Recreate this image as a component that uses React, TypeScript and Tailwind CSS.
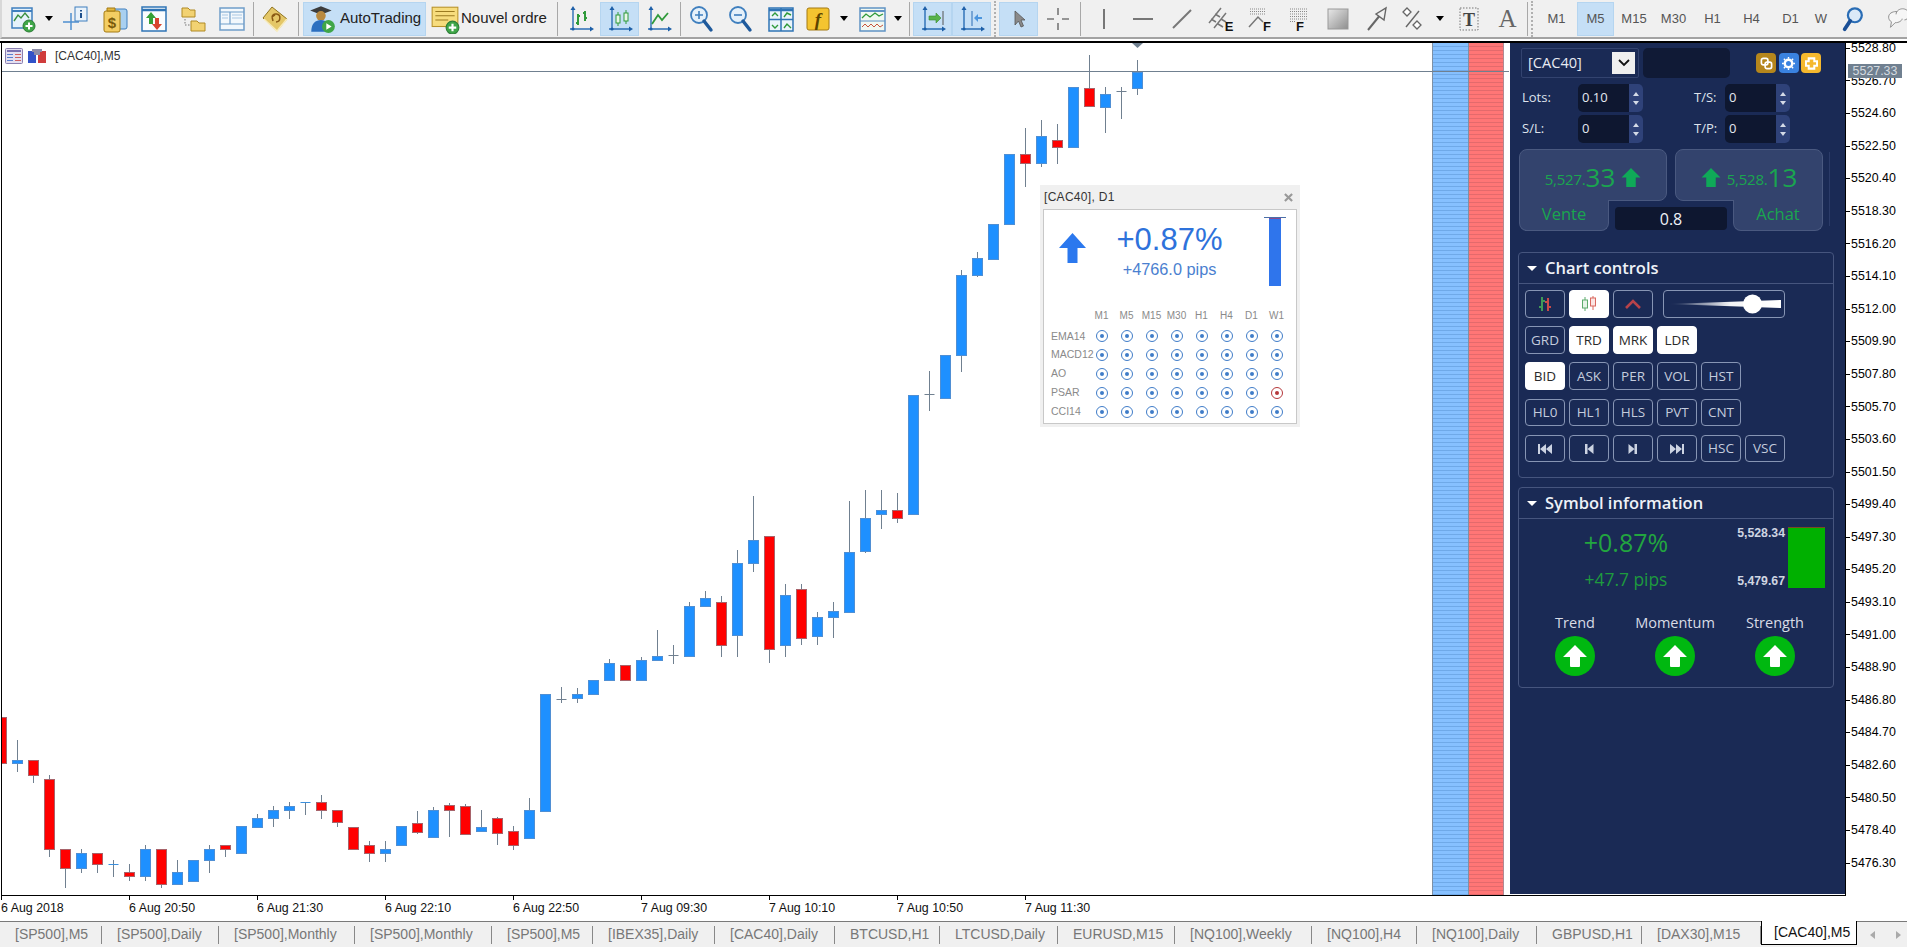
import * as React from "react";

type Candle = [number, number, number, number, "b" | "r"];

// body top, body bottom, wick top, wick bottom, colour (page pixels, 16px apart)
const CANDLES: Candle[] = [
  [717, 763, 717, 763, "r"], [760, 763, 740, 772, "b"], [760, 775, 760, 783, "r"], [779, 849, 775, 857, "r"],
  [849, 868, 849, 888, "r"], [853, 868, 849, 873, "b"], [853, 864, 853, 873, "r"], [864, 864, 860, 877, "b"],
  [872, 876, 864, 881, "r"], [849, 876, 845, 881, "b"], [849, 884, 849, 888, "r"], [872, 884, 860, 884, "b"],
  [860, 881, 860, 881, "b"], [849, 860, 845, 873, "b"], [845, 849, 845, 857, "r"], [826, 853, 826, 853, "b"],
  [818, 827, 814, 827, "b"], [810, 818, 806, 827, "b"], [806, 810, 802, 819, "b"], [802, 802, 802, 815, "b"],
  [802, 810, 795, 819, "r"], [810, 822, 810, 827, "r"], [827, 849, 827, 849, "r"], [845, 853, 841, 862, "r"],
  [849, 853, 841, 862, "b"], [826, 845, 826, 845, "b"], [823, 832, 811, 834, "r"], [810, 837, 807, 837, "b"],
  [805, 810, 803, 837, "r"], [806, 834, 804, 834, "r"], [827, 831, 810, 832, "b"], [818, 833, 817, 845, "r"],
  [831, 845, 826, 850, "r"], [810, 838, 798, 839, "b"], [694, 811, 694, 811, "b"], [699, 699, 687, 703, "b"],
  [694, 698, 688, 703, "b"], [680, 694, 680, 694, "b"], [663, 680, 659, 681, "b"], [665, 680, 665, 680, "r"],
  [660, 680, 657, 680, "b"], [656, 660, 630, 660, "b"], [655, 655, 645, 664, "b"], [606, 656, 602, 657, "b"],
  [598, 606, 591, 606, "b"], [602, 645, 596, 657, "r"], [563, 635, 550, 657, "b"], [540, 563, 496, 572, "b"],
  [536, 649, 536, 663, "r"], [595, 645, 584, 657, "b"], [589, 638, 584, 645, "r"], [617, 636, 612, 645, "b"],
  [611, 617, 602, 638, "b"], [552, 612, 501, 612, "b"], [518, 551, 490, 553, "b"], [510, 514, 490, 529, "b"],
  [510, 518, 493, 523, "r"], [395, 514, 395, 514, "b"], [394, 394, 371, 411, "b"], [355, 398, 355, 371, "b"],
  [275, 355, 270, 372, "b"], [258, 275, 252, 277, "b"], [224, 259, 224, 259, "b"], [154, 224, 154, 224, "b"],
  [154, 163, 128, 187, "r"], [136, 163, 120, 167, "b"], [140, 147, 124, 164, "r"], [87, 147, 87, 147, "b"],
  [88, 106, 55, 106, "r"], [94, 107, 87, 133, "b"], [91, 91, 87, 119, "b"], [72, 88, 60, 95, "b"],
];

const PRICES = Array.from({ length: 26 }, (_, i) => (5528.8 - i * 2.1).toFixed(2));
const TIMES = ["6 Aug 2018", "6 Aug 20:50", "6 Aug 21:30", "6 Aug 22:10", "6 Aug 22:50", "7 Aug 09:30", "7 Aug 10:10", "7 Aug 10:50", "7 Aug 11:30"];

const TABS: [string, string][] = [
  ["[SP500],M5", "w-[102px]"], ["[SP500],Daily", "w-[117px]"], ["[SP500],Monthly", "w-[136px]"], ["[SP500],Monthly", "w-[137px]"],
  ["[SP500],M5", "w-[101px]"], ["[IBEX35],Daily", "w-[122px]"], ["[CAC40],Daily", "w-[120px]"], ["BTCUSD,H1", "w-[105px]"],
  ["LTCUSD,Daily", "w-[118px]"], ["EURUSD,M15", "w-[117px]"], ["[NQ100],Weekly", "w-[137px]"], ["[NQ100],H4", "w-[105px]"],
  ["[NQ100],Daily", "w-[120px]"], ["GBPUSD,H1", "w-[105px]"], ["[DAX30],M15", "w-[119px]"],
];

const HEADS = ["M1", "M5", "M15", "M30", "H1", "H4", "D1", "W1"];
const ROWS = ["EMA14", "MACD12", "AO", "PSAR", "CCI14"];

function Ico({ children, size = 28 }: { children: React.ReactNode; size?: number }) {
  return (
    <svg viewBox="0 0 28 28" width={size} height={size}>
      {children}
    </svg>
  );
}

const Plus = ({ x, y }: { x: number; y: number }) => (
  <g>
    <circle cx={x} cy={y} r="6" fill="#3fa648" stroke="#2c7d36" />
    <path d={`M${x - 3.5} ${y}h7M${x} ${y - 3.5}v7`} stroke="#fff" strokeWidth="2" />
  </g>
);

const Axes = () => (
  <g fill="#1d5fa8">
    <path d="M6 4v20M3 24h22" stroke="#2a6db5" strokeWidth="1.4" fill="none" />
    <path d="M6 1l2.5 4h-5zM27 24l-4 2.5v-5z" />
    <circle cx="6" cy="24" r="1.6" />
  </g>
);

const Tool = ({ children, className = "w-[39px]", on = false }: { children: React.ReactNode; className?: string; on?: boolean }) => (
  <div className={`flex h-[34px] shrink-0 items-center justify-center ${className} ${on ? "border border-[#b5d5f0] bg-[#c5dff6]" : ""}`}>{children}</div>
);

const Sep = ({ className = "w-[8px]" }: { className?: string }) => (
  <div className={`flex h-[34px] shrink-0 justify-center ${className}`}>
    <div className="h-full w-px bg-[#a8a8a8]" />
  </div>
);

const Caret = ({ className }: { className: string }) => (
  <div className={`flex shrink-0 justify-center ${className}`}>
    <div className="h-0 w-0 border-x-[4px] border-t-[5px] border-x-transparent border-t-black" />
  </div>
);

const Grip = () => (
  <div className="flex h-[36px] w-[8px] shrink-0 justify-center">
    <div className="h-full w-[2px] border-l-2 border-dotted border-[#b0b0b0]" />
  </div>
);

function Toolbar() {
  const grey = "#777";
  return (
    <div className="flex h-[39px] shrink-0 items-center border-b-2 border-l-2 border-[#a3a3a3] border-l-[#d8d8d8] bg-[#f0f0f0] pl-px text-[15px] text-[#222]">
      <Tool>
        <Ico>
          <rect x="3" y="3" width="20" height="20" fill="#e6f2fb" stroke="#3f7fbe" strokeWidth="1.5" />
          <path d="M3 6h20" stroke="#3f7fbe" strokeWidth="2" />
          <path d="M5 16l4-6 3 3 4-5 4 5" fill="none" stroke="#3a8f3f" strokeWidth="1.4" />
          <Plus x={20} y={21} />
        </Ico>
      </Tool>
      <Caret className="w-[14px]" />
      <Tool>
        <Ico>
          <path d="M9 8v17M1 17h16" stroke="#4d8fd0" strokeWidth="1.5" />
          <rect x="13" y="2" width="12" height="14" fill="#eaf3fb" stroke="#3f7fbe" />
          <path d="M19 5v1.5M19 8v5" stroke="#1d4f8c" strokeWidth="2" />
        </Ico>
      </Tool>
      <Tool>
        <Ico>
          <rect x="12" y="4" width="14" height="20" rx="2" fill="#a9d0f0" stroke="#3f7fbe" />
          <rect x="3" y="6" width="16" height="21" rx="2" fill="#f3cd63" stroke="#a47a12" />
          <path d="M6 3h8v3H6z" fill="#e3b73f" stroke="#a47a12" />
          <text x="11" y="23" textAnchor="middle" fontSize="15" fontWeight="700" fill="#7a5a0a" fontFamily="Liberation Sans">$</text>
        </Ico>
      </Tool>
      <Tool>
        <Ico>
          <rect x="2" y="2" width="24" height="24" fill="#fafcfe" stroke="#2f74b5" strokeWidth="1.5" />
          <path d="M2 5h24" stroke="#2f74b5" strokeWidth="2.5" />
          <path d="M11 7l5 6h-3v6H9v-6H6z" fill="#36a036" />
          <path d="M17 25l-5-6h3v-6h4v6h3z" fill="#d8452e" />
        </Ico>
      </Tool>
      <Tool>
        <Ico>
          <path d="M3 3h6l2 2h5v7H3z" fill="#f2d272" stroke="#b08a25" />
          <path d="M12 16h6l2 2h6v8H12z" fill="#f2d272" stroke="#b08a25" />
          <path d="M6 14v6h5" fill="none" stroke="#777" strokeDasharray="1.5 1.5" />
        </Ico>
      </Tool>
      <Tool>
        <Ico>
          <rect x="2" y="3" width="24" height="22" fill="#f3f8fc" stroke="#6f9dc9" strokeWidth="1.5" />
          <path d="M2 7h24M12 7v12M2 19h24" stroke="#6f9dc9" strokeWidth="1.2" />
          <path d="M4 10h6M4 13h6M14 10h10M14 13h10" stroke="#a9c7e3" />
        </Ico>
      </Tool>
      <Sep className="w-[4px]" />
      <Tool>
        <Ico>
          <path d="M11 2l15 12-10 12L2 13z" fill="#e4c768" stroke="#8f7420" />
          <path d="M3 14l13 12 10-12" fill="none" stroke="#f8ecbd" strokeWidth="1.6" />
          <path d="M11 12a4 4 0 1 1 4 5M11 12l3-2M11 12l1 4" fill="none" stroke="#8a5a14" strokeWidth="1.5" />
        </Ico>
      </Tool>
      <Sep className="w-[9px]" />
      <div className="flex h-[34px] w-[123px] shrink-0 items-center border border-[#b5d5f0] bg-[#c5dff6] pl-[3px]">
        <Ico size={30}>
          <path d="M3 6l10-4 10 4-10 4z" fill="#3c3c3c" />
          <circle cx="13" cy="11" r="4.5" fill="#b9893f" />
          <path d="M4 26c0-8 4-11 9-11s8 3 8 11z" fill="#2b6fc0" />
          <circle cx="20" cy="21" r="6" fill="#3fa648" />
          <path d="M18 18l5 3-5 3z" fill="#fff" />
        </Ico>
        <span className="ml-[3px]">AutoTrading</span>
      </div>
      <div className="flex h-[34px] w-[127px] shrink-0 items-center pl-[4px]">
        <Ico size={30}>
          <rect x="2" y="3" width="24" height="18" fill="#f7dc7d" stroke="#b8922a" />
          <path d="M5 7h18M5 11h18M5 15h12" stroke="#9b7a20" />
          <Plus x={21} y={22} />
        </Ico>
        <span className="ml-[1px]">Nouvel ordre</span>
      </div>
      <Sep />
      <Tool>
        <Ico>
          <Axes />
          <path d="M11 9v11M9 18h2M11 11h2M18 6v10M16 8h2M18 13h2" stroke="#2f9a3a" strokeWidth="2" fill="none" />
        </Ico>
      </Tool>
      <Tool on>
        <Ico>
          <Axes />
          <path d="M12 7v14M20 5v14" stroke="#2f9a3a" />
          <rect x="10" y="10" width="4" height="8" fill="#e8f7e8" stroke="#2f9a3a" />
          <rect x="18" y="8" width="4" height="8" fill="#e8f7e8" stroke="#2f9a3a" />
        </Ico>
      </Tool>
      <Tool>
        <Ico>
          <Axes />
          <path d="M7 19l6-9 4 5 6-7" fill="none" stroke="#2f9a3a" strokeWidth="1.8" />
        </Ico>
      </Tool>
      <Sep className="w-[4px]" />
      {[0, 1].map((k) => (
        <Tool key={k}>
          <Ico>
            <circle cx="11" cy="10" r="8" fill="#e6f1fa" stroke="#3f7fbe" strokeWidth="1.8" />
            <path d="M16 16l7 9" stroke="#1f5a9c" strokeWidth="3.4" strokeLinecap="round" />
            <path d={k === 0 ? "M7 10h8M11 6v8" : "M7 10h8"} stroke="#3f7fbe" strokeWidth="1.6" />
          </Ico>
        </Tool>
      ))}
      <Tool className="w-[41px]">
        <Ico>
          <rect x="2" y="3" width="24" height="23" fill="#eaf4fb" stroke="#2f74b5" strokeWidth="1.5" />
          <path d="M2 14.500h24M14 3v23" stroke="#2f74b5" strokeWidth="1.5" />
          <path d="M2 5h24" stroke="#2f74b5" strokeWidth="2.5" />
          <path d="M5 11l3-3 3 3M17 12l3-4 4 2M5 20l3 3 3-3M17 23l3-4 4 4" fill="none" stroke="#2f9a3a" strokeWidth="1.4" />
        </Ico>
      </Tool>
      <Tool className="w-[34px]">
        <Ico>
          <rect x="3" y="3" width="22" height="22" rx="2" fill="#f4c430" stroke="#a47a12" />
          <text x="14" y="21" textAnchor="middle" fontSize="19" fontStyle="italic" fontWeight="700" fill="#5c4400" fontFamily="Liberation Serif">f</text>
        </Ico>
      </Tool>
      <Caret className="w-[18px]" />
      <Tool className="w-[37px]">
        <Ico>
          <rect x="2" y="3" width="25" height="23" fill="#f1f8f1" stroke="#5f93c4" strokeWidth="1.5" />
          <path d="M2 6h25" stroke="#5f93c4" strokeWidth="2" />
          <path d="M4 13l4-4 4 3 5-4 4 3 4-2" fill="none" stroke="#2f9a3a" strokeWidth="1.3" />
          <path d="M2 16h25" stroke="#5f93c4" />
          <path d="M4 22l3-3 3 3 3-3 3 3 3-3 3 3 3-2" fill="none" stroke="#c8553d" />
        </Ico>
      </Tool>
      <Caret className="w-[15px]" />
      <Sep />
      <Tool on>
        <Ico>
          <Axes />
          <path d="M10 11h7v-3l5 5-5 5v-3h-7z" fill="#58b24a" stroke="#3b8a30" strokeWidth=".6" />
          <path d="M24 6v14" stroke="#555" />
        </Ico>
      </Tool>
      <Tool on>
        <Ico>
          <Axes />
          <path d="M14 6v15" stroke="#2a6db5" />
          <path d="M24 12h-4V9l-4 4 4 4v-3h4z" fill="#4c95dd" />
        </Ico>
      </Tool>
      <Grip />
      <Tool on>
        <Ico>
          <path d="M10 6l10 9h-4l2.500 6-2.500 1-2.500-6-3.500 4z" fill="#8a8a8a" stroke="#555" strokeWidth=".8" />
        </Ico>
      </Tool>
      <Tool>
        <Ico>
          <path d="M14 3v7M14 18v7M3 14h7M18 14h7" stroke={grey} strokeWidth="1.6" />
        </Ico>
      </Tool>
      <Sep className="w-[7px]" />
      <Tool>
        <Ico>
          <path d="M14 4v20" stroke={grey} strokeWidth="2" />
        </Ico>
      </Tool>
      <Tool>
        <Ico>
          <path d="M4 14h20" stroke={grey} strokeWidth="2" />
        </Ico>
      </Tool>
      <Tool>
        <Ico>
          <path d="M5 23L23 5" stroke={grey} strokeWidth="2" />
        </Ico>
      </Tool>
      <Tool>
        <Ico>
          <path d="M2 18L14 3M7 23L19 8M4 14l5 3M8 9l5 3M11 19l5 3M14 14l5 3" stroke={grey} strokeWidth="1.5" />
          <text x="22" y="26" textAnchor="middle" fontSize="13" fontWeight="700" fill="#111" fontFamily="Liberation Sans">E</text>
        </Ico>
      </Tool>
      <Tool className="w-[40px]">
        <Ico>
          <path d="M4 4h16M4 6.500h16M4 9h16" stroke="#888" strokeDasharray="1 1" />
          <path d="M3 22l9-10 5 5" fill="none" stroke={grey} strokeWidth="1.5" />
          <text x="21" y="26" textAnchor="middle" fontSize="13" fontWeight="700" fill="#111" fontFamily="Liberation Sans">F</text>
        </Ico>
      </Tool>
      <Tool className="w-[39px]">
        <Ico>
          <path d="M4 4h17M4 6.500h17M4 9h17M4 11.500h17M4 14h17M4 16.500h6" stroke="#888" strokeDasharray="1 1" />
          <text x="14" y="26" textAnchor="middle" fontSize="13" fontWeight="700" fill="#111" fontFamily="Liberation Sans">F</text>
        </Ico>
      </Tool>
      <Tool className="w-[38px]">
        <Ico>
          <defs>
            <linearGradient id="sq" x1="0" y1="0" x2="1" y2="1">
              <stop offset="0" stopColor="#e8e8e8" />
              <stop offset="1" stopColor="#8e8e8e" />
            </linearGradient>
          </defs>
          <rect x="4" y="4" width="20" height="20" fill="url(#sq)" stroke="#999" />
        </Ico>
      </Tool>
      <Tool>
        <Ico>
          <path d="M5 25l13-16" stroke="#666" strokeWidth="2" />
          <path d="M23 3l-2 12-8-6z" fill="#f0f0f0" stroke="#666" strokeWidth="1.4" />
        </Ico>
      </Tool>
      <Tool className="w-[34px]">
        <Ico>
          <path d="M8 3l4 4-4 4-4-4zM18 16l4 4-4 4-4-4z" fill="#fff" stroke="#666" strokeWidth="1.3" />
          <path d="M7 22L20 6" stroke="#666" strokeWidth="1.4" />
        </Ico>
      </Tool>
      <Caret className="w-[19px]" />
      <Tool>
        <Ico>
          <rect x="5" y="3" width="18" height="22" fill="none" stroke="#777" strokeDasharray="1.5 1.5" />
          <text x="14" y="21" textAnchor="middle" fontSize="18" fontWeight="700" fill="#444" fontFamily="Liberation Serif">T</text>
        </Ico>
      </Tool>
      <Tool>
        <span className="font-['Liberation_Serif',serif] text-[25px] leading-none text-[#666]">A</span>
      </Tool>
      <Sep className="w-px" />
      <Grip />
      <Tool className="w-[41px]"><span className="text-[13px] text-[#555]">M1</span></Tool>
      <Tool className="w-[37px]" on><span className="text-[13px] text-[#555]">M5</span></Tool>
      <Tool className="w-[40px]"><span className="text-[13px] text-[#555]">M15</span></Tool>
      <Tool className="w-[39px]"><span className="text-[13px] text-[#555]">M30</span></Tool>
      <Tool className="w-[39px]"><span className="text-[13px] text-[#555]">H1</span></Tool>
      <Tool className="w-[39px]"><span className="text-[13px] text-[#555]">H4</span></Tool>
      <Tool className="w-[39px]"><span className="text-[13px] text-[#555]">D1</span></Tool>
      <Tool className="w-[22px]"><span className="text-[13px] text-[#555]">W</span></Tool>
      <Tool className="w-[42px]">
        <Ico size={26}>
          <circle cx="16" cy="10" r="7.500" fill="#dbe9f8" stroke="#2a6db5" strokeWidth="2.4" />
          <path d="M11 16l-6 9" stroke="#1a4f96" strokeWidth="4" strokeLinecap="round" />
        </Ico>
      </Tool>
      <Tool className="w-[46px]">
        <Ico size={26}>
          <path d="M5 12c0-4 4-6 8-6s7 2 7 6-4 6-8 6l-5 5 1-6c-2-1-3-3-3-5z" fill="#f6f6f6" stroke="#888" />
          <path d="M13 9c0-4 4-6 7-6s7 2 7 6-3 6-5 6" fill="#f6f6f6" stroke="#888" />
        </Ico>
      </Tool>
    </div>
  );
}

function Chart() {
  return (
    <svg viewBox="2 43 1430 852" className="block h-[852px] w-[1430px]">
      {CANDLES.map(([top, bot, wt, wb, c], i) => {
        const x = Math.round(1 + i * 16) + 0.5;
        const stroke = c === "r" ? "#a8636a" : "#4f8fd4";
        return (
          <g key={i}>
            <path d={`M${x} ${wt}V${wb}`} stroke="#708090" />
            {top === bot ? (
              <path d={`M${x - 5} ${top + 0.5}h10`} stroke={i === 19 || i === 7 ? "#3b8fdc" : "#708090"} />
            ) : (
              <rect x={x - 5} y={top + 0.5} width="10" height={bot - top} fill={c === "r" ? "#ff0000" : "#1e90ff"} stroke={stroke} />
            )}
          </g>
        );
      })}
      <path d="M1132 43h11l-5.500 5z" fill="#708090" />
    </svg>
  );
}

const Dot = ({ red = false }: { red?: boolean }) => (
  <span className={`flex h-[12px] w-[12px] items-center justify-center rounded-full border-[1.5px] ${red ? "border-[#b5383b]" : "border-[#3f7cc8]"}`}>
    <span className={`h-[4px] w-[4px] rounded-full ${red ? "bg-[#b5383b]" : "bg-[#3f7cc8]"}`} />
  </span>
);

function Popup() {
  return (
    <div className="absolute left-[1038px] top-[142px] h-[242px] w-[260px] bg-[#f0f0f0] px-[3px] font-['Liberation_Sans',sans-serif]">
      <div className="flex h-[24px] items-center justify-between pl-[1px] pr-[4px] text-[12px] tracking-[.3px] text-[#333]">
        <span>[CAC40], D1</span>
        <svg viewBox="0 0 10 10" className="h-[9px] w-[9px]">
          <path d="M1 1l8 8M9 1l-8 8" stroke="#999" strokeWidth="2.4" />
        </svg>
      </div>
      <div className="h-[215px] w-[254px] border border-[#c8c8c8] bg-white">
        <div className="flex h-[97px]">
          <svg viewBox="0 0 27 30" className="ml-[15px] mt-[23px] h-[30px] w-[27px]">
            <path d="M13.500 0L27 15H18.500V30H8.500V15H0z" fill="#2b78ee" />
          </svg>
          <div className="mt-[13px] flex w-[167px] flex-col items-center">
            <span className="text-[31px] leading-[34px] text-[#2e72db]">+0.87%</span>
            <span className="mt-[2px] text-[16.300px] leading-[20px] text-[#4a7fd0]">+4766.0 pips</span>
          </div>
          <div className="ml-[11px] mt-[7px] flex w-[22px] flex-col items-center">
            <div className="h-px w-full bg-[#4a6fa8]" />
            <div className="h-[68px] w-[12px] border-t border-[#8a4a90] bg-[#2f75ec]" />
          </div>
        </div>
        <div className="grid grid-cols-[38px_repeat(8,25px)] pl-[7px] text-[10px] text-[#8a8a8a]">
          <div className="h-[20px]" />
          {HEADS.map((h) => (
            <div key={h} className="flex h-[20px] items-center justify-center pb-[3px]">{h}</div>
          ))}
          {ROWS.map((r) => (
            <React.Fragment key={r}>
              <div className="flex h-[18.800px] items-center text-[10.500px]">{r}</div>
              {HEADS.map((h) => (
                <div key={h} className="flex h-[18.800px] items-center justify-center">
                  <Dot red={r === "PSAR" && h === "W1"} />
                </div>
              ))}
            </React.Fragment>
          ))}
        </div>
      </div>
    </div>
  );
}

function Spin({ value }: { value: string }) {
  return (
    <div className="flex h-[28px] w-[65px] shrink-0">
      <div className="flex w-[51px] items-center rounded-l-[5px] bg-[#0e1730] pl-[4px] text-[13px] text-[#e4e8f0]">{value}</div>
      <div className="flex w-[14px] flex-col items-center justify-center gap-[5px] rounded-r-[5px] bg-[#2f4279]">
        <div className="h-0 w-0 border-x-[3.500px] border-b-[4px] border-x-transparent border-b-[#d5dbe8]" />
        <div className="h-0 w-0 border-x-[3.500px] border-t-[4px] border-x-transparent border-t-[#d5dbe8]" />
      </div>
    </div>
  );
}

const GlowArrow = ({ className }: { className: string }) => (
  <svg viewBox="0 0 20 20" className={className}>
    <path d="M10 0L20 10H15V20H5V10H0z" fill="#0fa958" />
  </svg>
);

function Btn({ children, on = false, className = "w-[40px]" }: { children: React.ReactNode; on?: boolean; className?: string }) {
  return (
    <div
      className={`flex h-full shrink-0 items-center justify-center rounded-[4px] border text-[13.500px] ${className} ${
        on ? "border-white bg-white text-[#2a2a2a]" : "border-[#8795b4] text-[#c4ccdd]"
      }`}
    >
      {children}
    </div>
  );
}

const Skip = ({ d }: { d: string }) => (
  <svg viewBox="0 0 16 12" className="h-[12px] w-[16px]">
    <path d={d} fill="#ccd3e2" />
  </svg>
);

function SectionHead({ title }: { title: string }) {
  return (
    <div className="flex h-[31px] items-center border-b border-[#46557e] pl-[8px] text-[16.500px] font-semibold text-[#eef1f7]">
      <div className="h-0 w-0 border-x-[5px] border-t-[5px] border-x-transparent border-t-white" />
      <span className="ml-[8px]">{title}</span>
    </div>
  );
}

function Side() {
  return (
    <div className="flex h-full w-[335px] shrink-0 flex-col bg-[#1a2a55] pt-[5px] font-['Open_Sans',sans-serif]">
      <div className="flex h-[30px] pl-[11px]">
        <div className="flex w-[118px] items-center justify-between rounded-[2px] border border-[#33436f] pl-[6px] pr-[3px] text-[14.600px] text-[#e8ebf2]">
          <span>[CAC40]</span>
          <div className="flex h-[22px] w-[23px] items-center justify-center bg-[#efefef]">
            <svg viewBox="0 0 12 8" className="h-[8px] w-[12px]">
              <path d="M1 1l5 5 5-5" fill="none" stroke="#111" strokeWidth="1.800" />
            </svg>
          </div>
        </div>
        <div className="ml-[4px] w-[87px] rounded-[5px] bg-[#101a36]" />
        <div className="ml-[26px] flex items-center gap-[2.500px]">
          <div className="flex h-[20px] w-[20px] items-center justify-center rounded-[4px] bg-[#b5861c]">
            <svg viewBox="0 0 14 14" className="h-[13px] w-[13px]">
              <rect x="1.500" y="1.500" width="7" height="7" rx="2" fill="none" stroke="#fff" strokeWidth="1.800" />
              <rect x="5.500" y="5.500" width="7" height="7" rx="2" fill="none" stroke="#fff" strokeWidth="1.800" />
            </svg>
          </div>
          <div className="flex h-[20px] w-[20px] items-center justify-center rounded-[4px] bg-[#3a82e0]">
            <svg viewBox="0 0 14 14" className="h-[13px] w-[13px]">
              <circle cx="7" cy="7" r="4" fill="none" stroke="#fff" strokeWidth="2.600" />
              <path d="M7 0v2M7 12v2M0 7h2M12 7h2M2 2l1.500 1.500M10.500 10.500L12 12M12 2l-1.500 1.500M3.500 10.500L2 12" stroke="#fff" strokeWidth="1.500" />
            </svg>
          </div>
          <div className="flex h-[20px] w-[20px] items-center justify-center rounded-[4px] bg-[#f5b82e]">
            <svg viewBox="0 0 14 14" className="h-[13px] w-[13px]">
              <path d="M4 1.500h6v3h3v5h-3v3H4v-3H1v-5h3z" fill="none" stroke="#fff" strokeWidth="2.200" />
            </svg>
          </div>
        </div>
      </div>

      <div className="mt-[6px] flex h-[28px] items-center pl-[12px] text-[13px] text-[#dfe3ec]">
        <span className="w-[56px]">Lots:</span>
        <Spin value="0.10" />
        <span className="ml-[51px] w-[31px]">T/S:</span>
        <Spin value="0" />
      </div>
      <div className="mt-[3px] flex h-[28px] items-center pl-[12px] text-[13px] text-[#dfe3ec]">
        <span className="w-[56px]">S/L:</span>
        <Spin value="0" />
        <span className="ml-[51px] w-[31px]">T/P:</span>
        <Spin value="0" />
      </div>

      <div className="relative ml-[9px] mt-[6px] w-[304px]">
        <div className="flex h-[52px] gap-[8px]">
          <div className="flex w-[148px] items-center justify-center rounded-t-[8px] rounded-br-[8px] border border-[#4a5980] bg-[#33436d] pt-[4px] text-[#1aa64f]">
            <span className="mt-[5px] text-[15px] tracking-[-.2px]">5,527.</span>
            <span className="text-[26px] leading-none">33</span>
            <GlowArrow className="ml-[6px] h-[19px] w-[20px]" />
          </div>
          <div className="flex w-[148px] items-center justify-center rounded-t-[8px] rounded-bl-[8px] border border-[#4a5980] bg-[#33436d] pt-[4px] text-[#1aa64f]">
            <GlowArrow className="mr-[6px] h-[19px] w-[20px]" />
            <span className="mt-[5px] text-[15px] tracking-[-.2px]">5,528.</span>
            <span className="text-[26px] leading-none">13</span>
          </div>
        </div>
        <div className="flex h-[30px] items-start">
          <div className="-mt-px flex h-[31px] w-[90px] items-center justify-center rounded-b-[8px] border-x border-b border-[#4a5980] bg-[#33436d] pb-[1px] text-[16.500px] text-[#1aa64f]">
            Vente
          </div>
          <div className="ml-[6px] mt-[6px] flex h-[23px] w-[112px] items-center justify-center rounded-[4px] bg-[#0e1730] text-[16px] text-[#eef1f7]">0.8</div>
          <div className="-mt-px ml-[6px] flex h-[31px] w-[90px] items-center justify-center rounded-b-[8px] border-x border-b border-[#4a5980] bg-[#33436d] pb-[1px] text-[16.500px] text-[#1aa64f]">
            Achat
          </div>
        </div>
        <div className="absolute left-[310px] top-[3px] h-[74px] w-px bg-[#2b3b68]" />
      </div>

      <div className="ml-[8px] mt-[21px] h-[226px] w-[316px] rounded-[4px] border border-[#46557e]">
        <SectionHead title="Chart controls" />
        <div className="flex flex-col pl-[6px] pt-[6px]">
          <div className="flex h-[28px] gap-[4px]">
            <Btn>
              <svg viewBox="0 0 18 18" className="h-[18px] w-[18px]">
                <path d="M6 2v14M3 12h3M6 6h3" stroke="#3f9a58" strokeWidth="2" fill="none" />
                <path d="M12 3v13M9 7h3M12 12h3" stroke="#c94a4a" strokeWidth="2" fill="none" />
              </svg>
            </Btn>
            <Btn on>
              <svg viewBox="0 0 18 18" className="h-[18px] w-[18px]">
                <path d="M5 2v14" stroke="#5cab6c" />
                <rect x="2.500" y="5" width="5" height="8" fill="#e6f4e8" stroke="#5cab6c" />
                <path d="M13 1v14" stroke="#d9685f" />
                <rect x="10.500" y="3" width="5" height="8" fill="#fbe5e3" stroke="#d9685f" />
              </svg>
            </Btn>
            <Btn>
              <svg viewBox="0 0 16 10" className="h-[10px] w-[16px]">
                <path d="M1 9l7-7 7 7" fill="none" stroke="#b8434a" strokeWidth="2.600" />
              </svg>
            </Btn>
            <div className="ml-[6px] flex h-full w-[122px] items-center rounded-[4px] border border-[#8795b4] pl-[5px]">
              <svg viewBox="0 0 112 20" className="h-[20px] w-[112px]">
                <defs>
                  <linearGradient id="wedge" x1="0" y1="0" x2="1" y2="0">
                    <stop offset="0" stopColor="#fff" stopOpacity="0" />
                    <stop offset=".55" stopColor="#fff" stopOpacity=".95" />
                    <stop offset="1" stopColor="#fff" />
                  </linearGradient>
                </defs>
                <path d="M0 10L112 6V14Z" fill="url(#wedge)" />
                <circle cx="83.500" cy="10" r="9.500" fill="#fff" />
              </svg>
            </div>
          </div>
          <div className="mt-[8px] flex h-[28px] gap-[4px]">
            <Btn>GRD</Btn>
            <Btn on>TRD</Btn>
            <Btn on>MRK</Btn>
            <Btn on>LDR</Btn>
          </div>
          <div className="mt-[8px] flex h-[28px] gap-[4px]">
            <Btn on>BID</Btn>
            <Btn>ASK</Btn>
            <Btn>PER</Btn>
            <Btn>VOL</Btn>
            <Btn>HST</Btn>
          </div>
          <div className="mt-[9px] flex h-[27px] gap-[4px]">
            <Btn>HL0</Btn>
            <Btn>HL1</Btn>
            <Btn>HLS</Btn>
            <Btn>PVT</Btn>
            <Btn>CNT</Btn>
          </div>
          <div className="mt-[9px] flex h-[27px] gap-[4px]">
            <Btn><Skip d="M1 1h2v10H1zM9 1v10L3 6zM15 1v10L9 6z" /></Btn>
            <Btn><Skip d="M4 1h2.500v10H4zM12.500 1v10L6.500 6z" /></Btn>
            <Btn><Skip d="M3.500 1v10l6-5zM9.500 1H12v10H9.500z" /></Btn>
            <Btn><Skip d="M1 1v10l6-5zM7 1v10l6-5zM13 1h2v10h-2z" /></Btn>
            <Btn>HSC</Btn>
            <Btn>VSC</Btn>
          </div>
        </div>
      </div>

      <div className="ml-[8px] mt-[9px] h-[201px] w-[316px] rounded-[4px] border border-[#46557e]">
        <SectionHead title="Symbol information" />
        <div className="flex h-[80px] pt-[4px]">
          <div className="ml-[48px] flex w-[118px] flex-col items-center text-[#22a53f]">
            <span className="text-[25px] leading-[38px]">+0.87%</span>
            <span className="mt-[6px] text-[17.400px] leading-[24px] text-[#1e9a3e]">+47.7 pips</span>
          </div>
          <div className="ml-[46px] mt-[3px] flex h-[62px] w-[54px] flex-col justify-between text-right font-['Liberation_Sans',sans-serif] text-[12.300px] font-bold leading-[14px] text-[#cfd5e2]">
            <span>5,528.34</span>
            <span>5,479.67</span>
          </div>
          <div className="ml-[3px] mt-[4px] h-[61px] w-[37px] border-t border-[#7a4a20] bg-[#00b000]" />
        </div>
        <div className="mt-[14px] flex justify-between pl-[16px] pr-[18px] text-center text-[14.500px] text-[#d8dce6]">
          {["Trend", "Momentum", "Strength"].map((t) => (
            <div key={t} className="flex w-[80px] flex-col items-center">
              <span className="leading-[20px]">{t}</span>
              <div className="mt-[3px] flex h-[40px] w-[40px] items-center justify-center rounded-full bg-[#00b810]">
                <svg viewBox="0 0 24 24" className="h-[24px] w-[24px]">
                  <path d="M12 1L24 13H17V22A1 1 0 0 1 16 23H8A1 1 0 0 1 7 22V13H0z" fill="#fff" />
                </svg>
              </div>
            </div>
          ))}
        </div>
      </div>
    </div>
  );
}

export default function App() {
  return (
    <div className="flex h-[947px] w-[1907px] flex-col overflow-hidden bg-white font-['Liberation_Sans',sans-serif]">
      <Toolbar />
      <div className="h-[2px] shrink-0 bg-white" />
      <div className="flex h-[855px] shrink-0 border-t-2 border-black">
        <div className="relative ml-px flex h-[853px] w-[1845px] shrink-0 border-b border-l border-r border-black">
          <div className="relative h-[852px] w-[1430px] shrink-0">
            <Chart />
            <div className="absolute left-[3px] top-[4px] flex items-center">
              <svg viewBox="0 0 18 16" className="h-[16px] w-[18px]">
                <rect x=".5" y=".5" width="17" height="15" rx="1" fill="#e4dff0" stroke="#8a7fb0" />
                <path d="M2 3h14" stroke="#7a6fb0" strokeWidth="2" />
                <path d="M2 6.500h6M2 9.500h6M2 12.500h6" stroke="#5a7fd0" />
                <path d="M10 6.500h6M10 9.500h6M10 12.500h6" stroke="#d06060" />
              </svg>
              <svg viewBox="0 0 20 16" className="ml-[4px] h-[16px] w-[20px]">
                <path d="M1 3h8v12H1z" fill="#3252c8" />
                <path d="M11 3h8v12h-8z" fill="#d03c3c" />
                <path d="M5 1h10v3h-2v3H7V4H5z" fill="#8c8ca8" />
              </svg>
              <span className="ml-[8px] text-[12px] text-[#333]">[CAC40],M5</span>
            </div>
          </div>
          <div className="h-full w-[37px] shrink-0 border-x border-[#7f90a4] bg-[repeating-linear-gradient(to_bottom,#86c0ff_0,#86c0ff_3px,#6fa9e8_3px,#6fa9e8_4px)]" />
          <div className="h-full w-[35px] shrink-0 border-r border-[#b08a94] bg-[repeating-linear-gradient(to_bottom,#ff7676_0,#ff7676_3px,#e36a6c_3px,#e36a6c_4px)]" />
          <div className="w-[6px] shrink-0" />
          <div className="h-[851px] shrink-0">
            <Side />
          </div>
          <div className="absolute left-0 top-[28px] h-px w-[1507px] bg-[#708090]" />
          <Popup />
        </div>
        <div className="relative flex flex-1 flex-col text-[12.400px] text-black">
          {PRICES.map((p) => (
            <div key={p} className="flex h-[32.600px] shrink-0 items-center first:-mt-[11px]">
              <div className="h-px w-[4px] bg-black" />
              <span className="ml-px">{p}</span>
            </div>
          ))}
          <div className="absolute left-[2px] top-[21px] flex h-[14px] w-[54px] items-center justify-center bg-[#708090] text-[#d5dbe0]">5527.33</div>
        </div>
      </div>
      <div className="flex h-[25px] shrink-0 pl-px text-[12.400px] text-[#111]">
        {TIMES.map((t) => (
          <div key={t} className="w-[128px] shrink-0">
            <div className="h-[4px] w-px bg-black" />
            <div className="mt-[1px] leading-[14px]">{t}</div>
          </div>
        ))}
      </div>
      <div className="flex h-[26px] shrink-0 items-center border-t border-[#7a7a7a] bg-[#f0f0f0] text-[14px] text-[#777]">
        {TABS.map(([t, w], i) => (
          <div key={i} className={`flex h-[18px] shrink-0 items-center border-r border-[#888] pl-[15px] ${w}`}>
            {t}
          </div>
        ))}
        <div className="-mt-[3px] flex h-[24px] w-[96px] shrink-0 items-center border border-t-0 border-black bg-white pl-[12px] text-[#111]">[CAC40],M5</div>
        <div className="ml-[13px] h-0 w-0 border-y-[4px] border-r-[5px] border-y-transparent border-r-[#aaa]" />
        <div className="ml-[21px] h-0 w-0 border-y-[4px] border-l-[5px] border-y-transparent border-l-[#aaa]" />
      </div>
    </div>
  );
}
